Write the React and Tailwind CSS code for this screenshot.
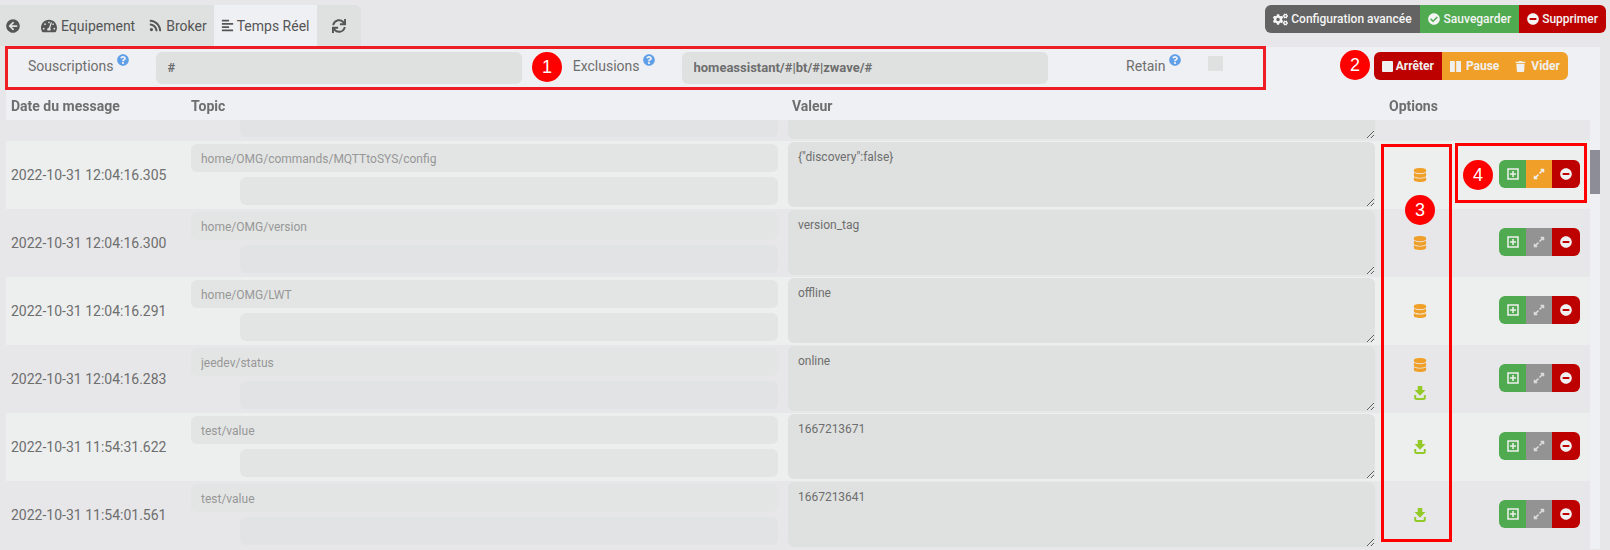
import React, { useLayoutEffect, useRef } from 'react';
import {
  FaArrowCircleLeft, FaTachometerAlt, FaRss, FaAlignLeft, FaSync, FaQuestionCircle, FaCogs,
  FaCheckCircle, FaMinusCircle, FaTrash, FaDatabase, FaExpandAlt,
} from 'react-icons/fa';

const messages = [
  { date: '', topic: '', value: '', icons: [] },
  { date: '2022-10-31 12:04:16.305', topic: 'home/OMG/commands/MQTTtoSYS/config', value: '{"discovery":false}', icons: ['retain'], json: true },
  { date: '2022-10-31 12:04:16.300', topic: 'home/OMG/version', value: 'version_tag', icons: ['retain'] },
  { date: '2022-10-31 12:04:16.291', topic: 'home/OMG/LWT', value: 'offline', icons: ['retain'] },
  { date: '2022-10-31 12:04:16.283', topic: 'jeedev/status', value: 'online', icons: ['retain', 'known'] },
  { date: '2022-10-31 11:54:31.622', topic: 'test/value', value: '1667213671', icons: ['known'] },
  { date: '2022-10-31 11:54:01.561', topic: 'test/value', value: '1667213641', icons: ['known'] },
];

function DownloadIcon() {
  return (
    <svg viewBox="0 0 12 14" className="h-[14px] w-3" aria-hidden="true">
      <path d="M3.7 0h4.6v4H11.500L6 9.800 0.500 4H3.700z" fill="#94ca28" />
      <path d="M1.200 9v2.500q0 1.500 1.500 1.500h6.600q1.500 0 1.500-1.500V9" fill="none" stroke="#94ca28" strokeWidth="2" />
    </svg>
  );
}

function AddIcon() {
  return (
    <svg viewBox="0 0 12 12" className="size-3 fill-none stroke-[#f0f0f0]" aria-hidden="true">
      <rect x="1" y="1" width="10" height="10" strokeWidth="1.500" />
      <path d="M6 3v6M3 6h6" strokeWidth="1.500" />
    </svg>
  );
}

function StopIcon() {
  return (
    <svg viewBox="0 0 11 11" className="size-[11px] fill-[#f0f0f0]" aria-hidden="true">
      <rect width="11" height="11" rx="1" />
    </svg>
  );
}

function PauseIcon() {
  return (
    <svg viewBox="0 0 11 11" className="size-[11px] fill-[#f0f0f0]" aria-hidden="true">
      <rect width="4.800" height="11" rx="0.500" />
      <rect x="6.200" width="4.800" height="11" rx="0.500" />
    </svg>
  );
}

function Help() {
  return <FaQuestionCircle className="mt-[2px] size-3 text-[#5f9fe8]" />;
}

function Marker({ children, className }) {
  return (
    <span className={`absolute z-30 flex size-[30px] items-center justify-center rounded-full bg-[#fe0000] font-['Liberation_Sans',sans-serif] text-[18px] leading-none text-white ${className}`}>
      {children}
    </span>
  );
}

function Row({ message, striped }) {
  return (
    <tr className={`h-[68px] ${striped ? 'bg-[#edefee]' : 'bg-[#e7e7e9]'}`}>
      <td className="p-0 pl-[5px] text-sm">{message.date}</td>
      <td className="p-0 pb-[2px] pl-[5px] pr-[10px]">
        <div className="flex flex-col gap-[5px]">
          <input
            aria-label="Topic"
            disabled
            defaultValue={message.topic}
            className="h-7 w-full rounded-md bg-[#e3e5e4] px-[10px] pt-[2px] text-xs text-[#979797]"
          />
          <div className="pl-[49px]">
            <input
              aria-label="Nom"
              disabled
              className={`block h-7 w-full rounded-md px-[10px] text-xs ${striped ? 'bg-[#e3e5e4]' : 'bg-[#e2e3e5]'}`}
            />
          </div>
        </div>
      </td>
      <td className="p-0 pb-[2px] pr-[5px]">
        <textarea
          aria-label="Valeur"
          defaultValue={message.value}
          className="block h-[65px] w-full resize-y rounded-md bg-[#dfe1e0] px-[10px] py-[7px] text-xs leading-[17px] outline-none"
        />
      </td>
      <td className="p-0 pb-[2px]">
        <div className="flex items-center justify-between pr-[10px]">
          <div className="flex w-20 flex-col items-center gap-[14px] pt-[2px]">
            {message.icons.includes('retain') && <FaDatabase className="size-[14px] text-[#f0a029]" />}
            {message.icons.includes('known') && <DownloadIcon />}
          </div>
          <div className="flex h-7 overflow-hidden rounded-md text-[#f0f0f0]">
            <button aria-label="Ajouter" className="flex w-[27px] items-center justify-center bg-[#50aa50]"><AddIcon /></button>
            <button
              aria-label="Développer"
              className={`flex w-[26px] items-center justify-center ${message.json ? 'bg-[#f0a029]' : 'bg-[#939393] text-[#dcdcdc]'}`}
            >
              <FaExpandAlt className="size-3" />
            </button>
            <button aria-label="Supprimer" className="flex w-7 items-center justify-center bg-[#bd0000]"><FaMinusCircle className="size-3" /></button>
          </div>
        </div>
      </td>
    </tr>
  );
}

export default function App() {
  const scroller = useRef(null);
  useLayoutEffect(() => {
    scroller.current.scrollTop = scroller.current.scrollHeight;
  }, []);

  const field = 'h-8 w-full rounded-md bg-[#dfe1e0] px-3 pb-px text-[13px] font-bold outline-none';
  const label = 'flex justify-end gap-[3px] pr-[13px] text-sm leading-7';

  return (
    <div className="relative flex h-screen flex-col overflow-hidden bg-[#e7e7e9] pb-px font-[Roboto,sans-serif] text-[#6e6e6e]">
      <header className="flex items-start justify-between pr-1 pt-[5px]">
        <nav className="flex h-[41px] items-stretch overflow-hidden rounded-tr-md bg-[#dfe1e0] text-sm text-[#555]">
          <a href="#retour" aria-label="Retour" className="flex items-center pl-[6px] pr-[14px]"><FaArrowCircleLeft className="size-[14px]" /></a>
          <a href="#equipement" className="flex items-center gap-1 px-[7px]"><FaTachometerAlt className="size-4" />Equipement</a>
          <a href="#broker" className="flex items-center gap-1 px-[7px]"><FaRss className="size-[13px]" />Broker</a>
          <a href="#temps-reel" className="flex items-center gap-[3px] bg-[#eff0f3] px-[7px]"><FaAlignLeft className="size-[13px]" />Temps Réel</a>
          <a href="#rafraichir" aria-label="Rafraîchir" className="flex items-center px-[15px]"><FaSync className="size-[14px]" /></a>
        </nav>
        <div className="flex h-7 overflow-hidden rounded-md text-xs font-medium text-[#f5f5f5]">
          <button className="flex items-center gap-[3px] bg-[#636363] px-2"><FaCogs className="size-[15px]" />Configuration avancée</button>
          <button className="flex items-center gap-1 bg-[#50aa50] px-2"><FaCheckCircle className="size-3" />Sauvegarder</button>
          <button className="flex items-center gap-[3px] bg-[#bd0000] px-2"><FaMinusCircle className="size-3" />Supprimer</button>
        </div>
      </header>

      <main className="ml-[6px] mr-[10px] mt-px flex min-h-0 flex-1 flex-col bg-[#eff0f3]">
        <form className="grid grid-cols-12 items-start pb-[6px] pl-1 pr-3 pt-[5px]">
          <label htmlFor="subscriptions" className={label}>Souscriptions<Help /></label>
          <div className="col-span-3 px-[14px]"><input id="subscriptions" defaultValue="#" className={field} /></div>
          <label htmlFor="exclusions" className={label}>Exclusions<Help /></label>
          <div className="col-span-3 px-[14px]"><input id="exclusions" defaultValue="homeassistant/#|bt/#|zwave/#" className={field} /></div>
          <label htmlFor="retain" className={label}>Retain<Help /></label>
          <div className="px-[14px] pt-1">
            <input id="retain" type="checkbox" className="block size-[15px] appearance-none bg-[#dfe1e0]" />
          </div>
          <div className="col-span-2 flex justify-end pr-5">
            <div className="flex h-7 overflow-hidden rounded-md text-xs font-bold text-[#f0f0f0]">
              <button type="button" className="flex items-center gap-[3px] bg-[#bd0000] px-2"><StopIcon />Arrêter</button>
              <button type="button" className="flex items-center gap-[5px] bg-[#f0a029] px-2"><PauseIcon />Pause</button>
              <button type="button" className="flex items-center gap-[5px] bg-[#f0a029] px-2"><FaTrash className="size-[11px]" />Vider</button>
            </div>
          </div>
        </form>

        <div className="flex min-h-0 flex-1">
          <div ref={scroller} className="min-w-0 flex-1 overflow-y-auto [scrollbar-width:none]">
            <table className="w-full table-fixed border-collapse">
              <thead className="sticky top-0 z-10 bg-[#eff0f3]">
                <tr className="h-[30px] text-left text-sm">
                  <th className="w-[180px] p-0 pl-[5px] pt-[2px] font-bold">Date du message</th>
                  <th className="w-[38%] p-0 pl-[5px] pt-[2px] font-bold">Topic</th>
                  <th className="p-0 pl-1 pt-[2px] font-bold">Valeur</th>
                  <th className="w-[210px] p-0 pl-[9px] pt-[2px] font-bold">Options</th>
                </tr>
              </thead>
              <tbody>
                {messages.map((message, i) => <Row key={i} message={message} striped={i % 2 === 1} />)}
              </tbody>
            </table>
          </div>
          <div className="w-[10px] pt-[60px]" aria-hidden="true"><div className="h-11 bg-[#8c8d96]" /></div>
        </div>
      </main>

      <div className="pointer-events-none absolute left-[5px] right-[344px] top-[46px] z-20 h-11 border-[3px] border-[#ee1c24]" />
      <div className="pointer-events-none absolute right-[158px] top-[144px] z-20 h-[398px] w-[71px] border-[3px] border-[#fe0000]" />
      <div className="pointer-events-none absolute right-[23px] top-[143px] z-20 h-[60px] w-[132px] border-[3px] border-[#fe0000]" />
      <Marker className="left-[532px] top-[52px]">1</Marker>
      <Marker className="right-[240px] top-[50px]">2</Marker>
      <Marker className="right-[175px] top-[195px]">3</Marker>
      <Marker className="right-[117px] top-[160px]">4</Marker>
    </div>
  );
}
